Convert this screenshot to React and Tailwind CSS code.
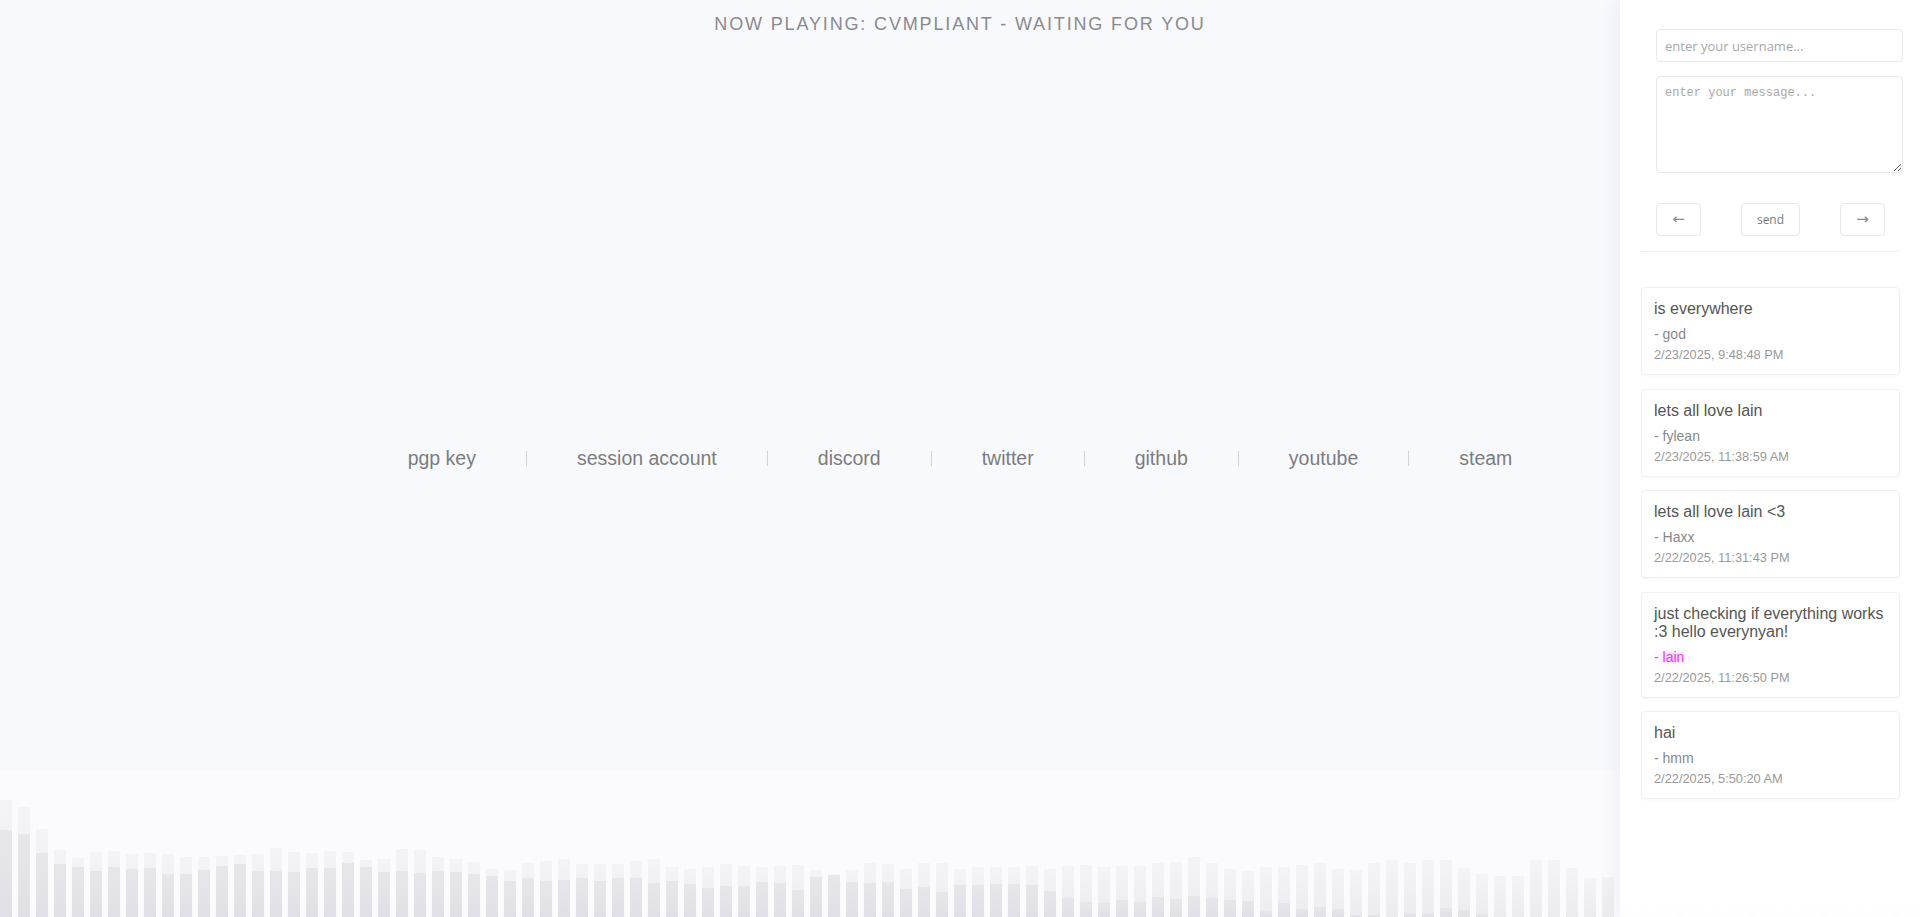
import React from "react";

const LIGHT = [800,807,829,850,858,852,851,854,853,854,857,857,856,855,854,848,852,853,851,852,860,859,849,850,857,859,862,869,870,863,861,859,864,864,864,861,859,867,869,867,864,866,867,866,865,870,874,870,863,864,869,863,863,869,867,867,867,866,869,866,865,867,866,866,863,862,857,863,869,871,867,867,865,863,869,870,863,860,863,860,860,868,874,876,876,860,860,868,878,877,882,878,874,876,880,872,870,874,878,876,873,879,877,874,876,880,878];
const DARK = [830,834,853,864,867,871,867,869,868,874,874,870,866,864,871,871,872,868,868,863,867,872,871,873,871,872,874,876,881,878,881,880,878,881,878,878,883,881,884,888,886,886,882,883,890,877,875,882,883,882,889,887,892,885,885,884,884,885,891,898,902,903,900,902,897,899,896,898,900,901,911,903,909,907,909,915,915,917,913,913,908,910,914,917,917,917,917,917,917,917,917,917,917,917,917,917,917,917,917,917,917,917,917,917,917,917,917];

const LINKS = ["pgp key", "session account", "discord", "twitter", "github", "youtube", "steam"];

const MESSAGES = [
  { text: "is everywhere", author: "god", date: "2/23/2025, 9:48:48 PM" },
  { text: "lets all love lain", author: "fylean", date: "2/23/2025, 11:38:59 AM" },
  { text: "lets all love lain <3", author: "Haxx", date: "2/22/2025, 11:31:43 PM" },
  { text: "just checking if everything works :3 hello everynyan!", author: "lain", date: "2/22/2025, 11:26:50 PM", special: true },
  { text: "hai", author: "hmm", date: "2/22/2025, 5:50:20 AM" },
];

export default function App() {
  return (
    <div className="relative h-[917px] w-[1920px] overflow-hidden bg-[#f8f9fd] font-['Liberation_Sans',Arial,sans-serif]">
      <main className="flex h-full flex-col items-center">
        <h1 className="pt-[15px] text-[18px] font-normal leading-[18px] tracking-[1.85px] text-[#8a8a8e]">
          NOW PLAYING: CVMPLIANT - WAITING FOR YOU
        </h1>
        <nav className="mt-[413px] flex items-center gap-[50px] text-[19.5px] leading-[24px] text-[#7c7c80]">
          {LINKS.map((l, i) => (
            <React.Fragment key={l}>
              {i > 0 && <span className="h-[15px] w-px bg-[#d2d2d8]" />}
              <a className="cursor-pointer">{l}</a>
            </React.Fragment>
          ))}
        </nav>
        <div className="mt-auto flex h-[147px] w-full items-end gap-[6px] bg-[#fbfbfe]">
          {LIGHT.map((t, i) => (
            <div
              key={i}
              className="relative w-[12px] shrink-0 bg-gradient-to-b from-[#f4f3f7] to-[#ecebf0]"
              style={{ height: 917 - t }}
            >
              <div
                className="absolute bottom-0 left-0 w-full bg-gradient-to-b from-[#e7e6eb] to-[#e1e0e6]"
                style={{ height: 917 - DARK[i] }}
              />
            </div>
          ))}
        </div>
      </main>

      <aside className="absolute right-0 top-0 flex h-full w-[300px] flex-col bg-white/95 pl-[21px] pr-[20px] shadow-[-4px_0_18px_rgba(40,40,80,0.06)]">
        <div className="border-b border-[#efeff1] px-[15px] pb-[15px] pt-[29px]">
          <input
            placeholder="enter your username..."
            className="block h-[33px] w-[247px] rounded-[4px] border border-[#e8e8ea] bg-white px-[8px] font-['Open_Sans',sans-serif] text-[13px] text-[#555] outline-none placeholder:text-[#a8a8a8]"
          />
          <textarea
            placeholder="enter your message..."
            className="mt-[14px] block h-[97px] w-[247px] rounded-[4px] border border-[#e8e8ea] bg-white p-[8px] font-['Liberation_Mono',monospace] text-[12px] leading-[16px] text-[#555] outline-none placeholder:text-[#a8a8a8]"
          />
          <div className="mt-[30px] flex items-center justify-between font-['Open_Sans',sans-serif]">
            <button className="flex h-[33px] w-[45px] items-center justify-center rounded-[4px] border border-[#e8e8ea] bg-white font-['DejaVu_Sans',sans-serif] text-[15px] text-[#8a8a8a]">
              ←
            </button>
            <button className="flex h-[33px] w-[59px] items-center justify-center rounded-[4px] border border-[#e8e8ea] bg-white text-[12px] text-[#7a7a7a]">
              send
            </button>
            <button className="flex h-[33px] w-[45px] items-center justify-center rounded-[4px] border border-[#e8e8ea] bg-white font-['DejaVu_Sans',sans-serif] text-[15px] text-[#8a8a8a]">
              →
            </button>
          </div>
        </div>
        <div className="flex flex-col gap-[13.5px] pt-[35px]">
          {MESSAGES.map((m, i) => (
            <div
              key={i}
              className="rounded-[4px] border border-[#f0f0f2] bg-white px-[12px] pb-[12px] pt-[12px] shadow-[0_1px_3px_rgba(0,0,0,0.04)]"
            >
              <div className="text-[16px] leading-[18.4px] text-[#555]">{m.text}</div>
              {m.special ? (
                <div className="mt-[7.6px] text-[14px] leading-[16px] text-[#e040f0] [text-shadow:0_0_6px_rgba(255,80,255,0.6)]">
                  - {m.author}
                </div>
              ) : (
                <div className="mt-[7.6px] text-[14px] leading-[16px] text-[#888]">- {m.author}</div>
              )}
              <div className="mt-[5px] text-[12.8px] leading-[15px] text-[#999]">{m.date}</div>
            </div>
          ))}
        </div>
      </aside>
    </div>
  );
}
